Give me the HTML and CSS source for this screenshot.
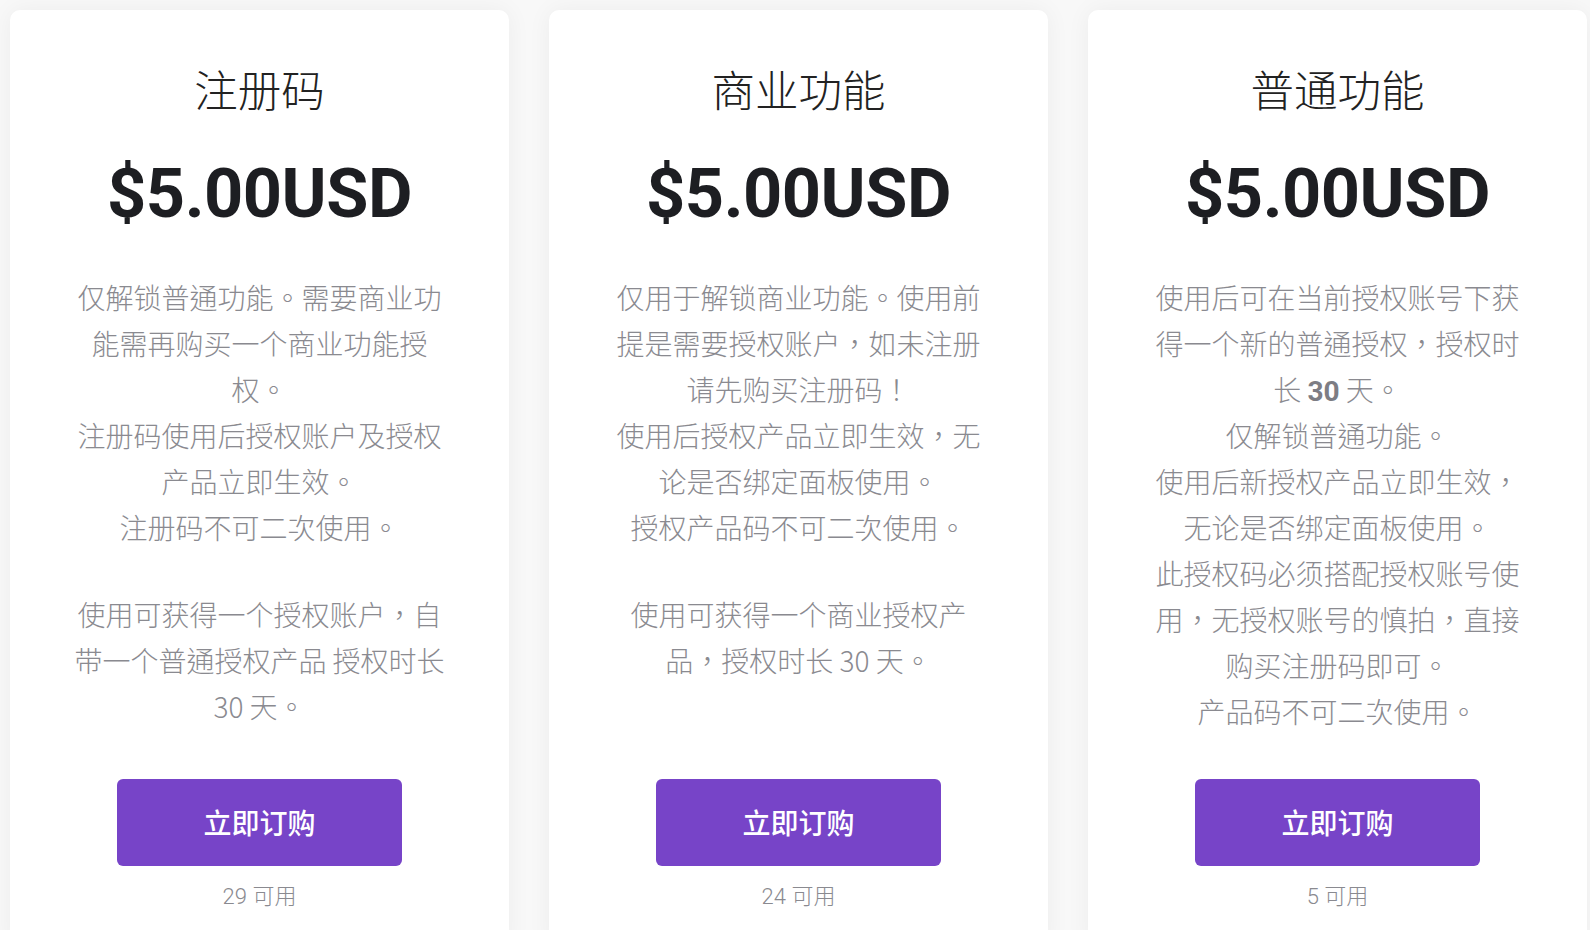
FILE: index.html
```html
<!DOCTYPE html>
<html lang="zh-CN">
<head>
<meta charset="utf-8">
<title>Pricing</title>
<link rel="stylesheet" href="styles.css">
</head>
<body>
<div class="plans">
  <div class="card">
    <h2 class="title">注册码</h2>
    <div class="price">$5.00USD</div>
    <div class="desc">
      <p>仅解锁普通功能。需要商业功能需再购买一个商业功能授权。<br>注册码使用后授权账户及授权产品立即生效。<br>注册码不可二次使用。</p>
      <p>使用可获得一个授权账户，自带一个普通授权产品 授权时长 30 天。</p>
    </div>
    <a class="buy">立即订购</a>
    <div class="stock">29 可用</div>
  </div>
  <div class="card">
    <h2 class="title">商业功能</h2>
    <div class="price">$5.00USD</div>
    <div class="desc">
      <p>仅用于解锁商业功能。使用前提是需要授权账户，如未注册请先购买注册码！<br>使用后授权产品立即生效，无论是否绑定面板使用。<br>授权产品码不可二次使用。</p>
      <p>使用可获得一个商业授权产品，授权时长 30 天。</p>
    </div>
    <a class="buy">立即订购</a>
    <div class="stock">24 可用</div>
  </div>
  <div class="card">
    <h2 class="title">普通功能</h2>
    <div class="price">$5.00USD</div>
    <div class="desc">
      <p>使用后可在当前授权账号下获得一个新的普通授权，授权时长 <b>30</b> 天。<br>仅解锁普通功能。<br>使用后新授权产品立即生效，无论是否绑定面板使用。<br>此授权码必须搭配授权账号使用，无授权账号的慎拍，直接购买注册码即可。<br>产品码不可二次使用。</p>
    </div>
    <a class="buy">立即订购</a>
    <div class="stock">5 可用</div>
  </div>
</div>
</body>
</html>
```

FILE: styles.css
```css
html, body {
  margin: 0;
  padding: 0;
  background: #f8f8f8;
  overflow: hidden;
}
body {
  font-family: Roboto, "Noto Sans CJK SC", sans-serif;
  color: #222;
}
.plans {
  display: flex;
  align-items: stretch;
  gap: 40px;
  padding: 10px 0 0 10px;
}
.card {
  flex: 0 0 499px;
  width: 499px;
  background: #fff;
  border-radius: 10px;
  box-shadow: 0 0 24px rgba(0, 0, 0, 0.05);
  display: flex;
  flex-direction: column;
  align-items: center;
  text-align: center;
  padding: 53px 0 40px;
  box-sizing: border-box;
}
.title {
  margin: 0;
  font-family: "Noto Sans CJK SC", sans-serif;
  font-weight: 300;
  font-size: 43.5px;
  line-height: 52px;
  color: #222;
}
.price {
  margin-top: 39px;
  font-family: Roboto, sans-serif;
  font-weight: 700;
  font-size: 68.5px;
  line-height: 80px;
  color: #1d1e22;
  letter-spacing: -0.5px;
}
.desc {
  flex: 1;
  width: 382px;
  margin-top: 40px;
  margin-bottom: 45px;
  font-family: "Noto Sans CJK TC", "Noto Sans CJK SC", sans-serif;
  font-feature-settings: "locl" 0;
  font-weight: 300;
  font-size: 28px;
  line-height: 46px;
  color: #8a8a90;
}
.desc p {
  margin: 0 0 41px;
}
.desc p:last-child {
  margin-bottom: 0;
}
.desc b {
  font-family: Roboto, sans-serif;
  font-weight: 700;
  line-height: 1;
  color: #7d7d84;
}
.buy {
  display: flex;
  align-items: center;
  justify-content: center;
  width: 285px;
  height: 87px;
  border-radius: 6px;
  background: #7744c8;
  color: #fff;
  font-family: "Noto Sans CJK SC", sans-serif;
  font-weight: 500;
  font-size: 28px;
  padding-bottom: 2px;
  box-sizing: border-box;
  cursor: pointer;
}
.stock {
  margin-top: 19px;
  font-family: Roboto, "Noto Sans CJK SC", sans-serif;
  font-weight: 300;
  font-size: 22px;
  line-height: 24px;
  color: #8a8a90;
}
```
